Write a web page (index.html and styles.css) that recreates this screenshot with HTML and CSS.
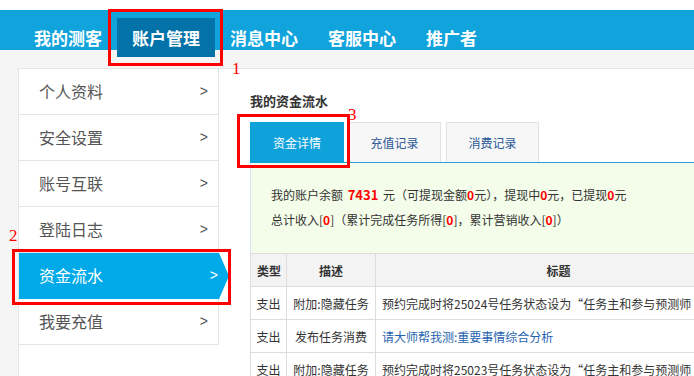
FILE: index.html
```html
<!DOCTYPE html>
<html lang="zh-CN">
<head>
    <meta charset="UTF-8">
    <title>资金流水</title>
    <link rel="stylesheet" href="styles.css">
</head>
<body>
<div class="page">
    <div class="topbar">
        <ul class="nav">
            <li>我的测客</li>
            <li class="on">账户管理</li>
            <li>消息中心</li>
            <li>客服中心</li>
            <li>推广者</li>
        </ul>
    </div>
    <div class="band"></div>

    <div class="wrap">
        <ul class="side">
            <li><span>个人资料</span><span class="gt">&gt;</span></li>
            <li><span>安全设置</span><span class="gt">&gt;</span></li>
            <li><span>账号互联</span><span class="gt">&gt;</span></li>
            <li><span>登陆日志</span><span class="gt">&gt;</span></li>
            <li class="on"><span>资金流水</span><span class="gt">&gt;</span></li>
            <li><span>我要充值</span><span class="gt">&gt;</span></li>
        </ul>

        <div class="main">
            <h2>我的资金流水</h2>
            <ul class="tabs">
                <li class="on">资金详情</li>
                <li>充值记录</li>
                <li>消费记录</li>
            </ul>
            <div class="info">
                <p>我的账户余额 <b class="big">7431</b> 元（可提现金额<b>0</b>元），提现中<b>0</b>元，已提现<b>0</b>元</p>
                <p>总计收入[<b>0</b>]（累计完成任务所得[<b>0</b>]，累计营销收入[<b>0</b>]）</p>
            </div>
            <table class="flow">
                <colgroup>
                    <col class="w-type">
                    <col class="w-desc">
                    <col class="w-title">
                </colgroup>
                <thead>
                    <tr>
                        <th>类型</th>
                        <th>描述</th>
                        <th>标题</th>
                    </tr>
                </thead>
                <tbody>
                    <tr>
                        <td class="c">支出</td>
                        <td class="c">附加:隐藏任务</td>
                        <td>预约完成时将25024号任务状态设为“任务主和参与预测师</td>
                    </tr>
                    <tr>
                        <td class="c">支出</td>
                        <td class="c">发布任务消费</td>
                        <td><a href="#">请大师帮我测:重要事情综合分析</a></td>
                    </tr>
                    <tr>
                        <td class="c">支出</td>
                        <td class="c">附加:隐藏任务</td>
                        <td>预约完成时将25023号任务状态设为“任务主和参与预测师</td>
                    </tr>
                </tbody>
            </table>
        </div>
    </div>

    <!-- 标注 -->
    <span class="mark box1"></span>
    <span class="mark box2"></span>
    <span class="mark box3"></span>
    <span class="num n1">1</span>
    <span class="num n2">2</span>
    <span class="num n3">3</span>
</div>
</body>
</html>
```

FILE: styles.css
```css
body {
    margin: 0;
    font-family: "Noto Sans CJK SC", "Liberation Sans", sans-serif;
    background-color: #f5f5f5;
    color: #333;
}

.page {
    position: relative;
    height: 376px;
    overflow: hidden;
}

/* 顶部导航 */
.topbar {
    background-color: #fff;
    padding-top: 10px;
}

.nav {
    list-style: none;
    margin: 0;
    padding: 0 0 0 19px;
    height: 40px;
    display: flex;
    background-color: #11a3dc;
}

.nav li {
    padding: 0 15px;
    height: 39px;
    margin-top: 8px;
    line-height: 39px;
    font-size: 17px;
    font-weight: bold;
    color: #fff;
}

.nav li.on {
    background-color: #0272a8;
    position: relative;
    z-index: 1;
}

.band {
    height: 18px;
}

.wrap {
    display: flex;
    margin-left: 18px;
    height: 320px;
    background-color: #fff;
    border-top: 1px solid #e5e5e5;
    border-left: 1px solid #e5e5e5;
}

/* 左侧菜单 */
.side {
    list-style: none;
    margin: 0;
    padding: 0;
    width: 199px;
    flex: none;
    align-self: flex-start;
    border-right: 1px solid #e5e5e5;
}

.side li {
    height: 45px;
    line-height: 45px;
    padding: 0 10px 0 20px;
    display: flex;
    justify-content: space-between;
    border-bottom: 1px solid #e5e5e5;
    font-size: 16px;
    color: #555;
}

.side li .gt {
    font-family: "Liberation Sans", sans-serif;
    font-size: 14px;
}

.side li.on {
    position: relative;
    background-color: #00aae8;
    border-bottom-color: #00aae8;
    color: #fff;
    margin-right: -1px;
    padding-right: 1px;
}

.side li.on::after {
    content: "";
    position: absolute;
    left: 100%;
    top: 0;
    border-left: 10px solid #00aae8;
    border-top: 23px solid transparent;
    border-bottom: 23px solid transparent;
}

/* 主内容 */
.main {
    flex: none;
    padding: 22px 0 0 31px;
}

.main h2 {
    margin: 0 0 11px;
    font-size: 13px;
    line-height: 20px;
    color: #333;
}

.tabs {
    list-style: none;
    margin: 0;
    padding: 0;
    width: 700px;
    display: flex;
    border-bottom: 1px solid #2b9cd8;
}

.tabs li {
    width: 93px;
    height: 40px;
    margin-right: 5px;
    box-sizing: border-box;
    line-height: 40px;
    text-align: center;
    font-size: 12px;
    color: #2a5896;
    background-color: #f7f7f7;
    border: 1px solid #e3e3e3;
    border-bottom: none;
}

.tabs li.on {
    width: 94px;
    margin-right: 4px;
    height: 41px;
    margin-bottom: -1px;
    background-color: #0fa2da;
    border-color: #0fa2da;
    color: #fff;
}

.info {
    width: 700px;
    padding: 19px 0 21px 20px;
    background-color: #f4fde9;
    border-left: 1px solid #d5e4f0;
    font-size: 12px;
    line-height: 25px;
    color: #333;
}

.info p {
    margin: 0;
}

.info b {
    color: #f00;
}

.info .big {
    font-size: 13px;
    margin: 0 2px;
}

/* 流水表 */
.flow {
    border-collapse: collapse;
    table-layout: fixed;
    width: 491px;
    font-size: 12px;
    color: #333;
}

.flow .w-type { width: 36px; }
.flow .w-desc { width: 89px; }
.flow .w-title { width: 366px; }

.flow th, .flow td {
    height: 32px;
    padding: 0 6px;
    border: 1px solid #ddd;
    white-space: nowrap;
    overflow: hidden;
}

.flow th {
    background-color: #f3f3f3;
    font-weight: bold;
    text-align: center;
}

.flow td.c {
    text-align: center;
    padding: 0;
}

.flow a {
    color: #1f64b0;
    text-decoration: none;
}

/* 红色标注 */
.mark {
    position: absolute;
    z-index: 5;
    box-sizing: border-box;
    border: 3px solid #f00;
}

.box1 { left: 108px; top: 9px; width: 115px; height: 57px; }
.box2 { left: 12px; top: 249px; width: 219px; height: 56px; }
.box3 { left: 237px; top: 114px; width: 113px; height: 54px; }

.num {
    position: absolute;
    z-index: 5;
    font-family: "Liberation Serif", serif;
    font-size: 17px;
    line-height: 1;
    color: #f00;
}

.n1 { left: 232px; top: 60px; }
.n2 { left: 9px; top: 227px; }
.n3 { left: 348px; top: 106px; }
```
